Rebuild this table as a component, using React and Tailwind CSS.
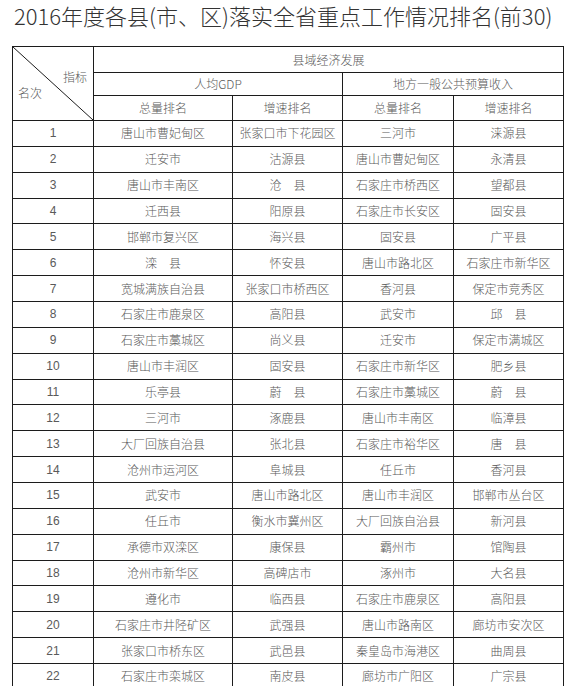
import React from 'react'

const rows = [
  ['唐山市曹妃甸区', '张家口市下花园区', '三河市', '涞源县'],
  ['迁安市', '沽源县', '唐山市曹妃甸区', '永清县'],
  ['唐山市丰南区', '沧　县', '石家庄市桥西区', '望都县'],
  ['迁西县', '阳原县', '石家庄市长安区', '固安县'],
  ['邯郸市复兴区', '海兴县', '固安县', '广平县'],
  ['滦　县', '怀安县', '唐山市路北区', '石家庄市新华区'],
  ['宽城满族自治县', '张家口市桥西区', '香河县', '保定市竞秀区'],
  ['石家庄市鹿泉区', '高阳县', '武安市', '邱　县'],
  ['石家庄市藁城区', '尚义县', '迁安市', '保定市满城区'],
  ['唐山市丰润区', '固安县', '石家庄市新华区', '肥乡县'],
  ['乐亭县', '蔚　县', '石家庄市藁城区', '蔚　县'],
  ['三河市', '涿鹿县', '唐山市丰南区', '临漳县'],
  ['大厂回族自治县', '张北县', '石家庄市裕华区', '唐　县'],
  ['沧州市运河区', '阜城县', '任丘市', '香河县'],
  ['武安市', '唐山市路北区', '唐山市丰润区', '邯郸市丛台区'],
  ['任丘市', '衡水市冀州区', '大厂回族自治县', '新河县'],
  ['承德市双滦区', '康保县', '霸州市', '馆陶县'],
  ['沧州市新华区', '高碑店市', '涿州市', '大名县'],
  ['遵化市', '临西县', '石家庄市鹿泉区', '高阳县'],
  ['石家庄市井陉矿区', '武强县', '唐山市路南区', '廊坊市安次区'],
  ['张家口市桥东区', '武邑县', '秦皇岛市海港区', '曲周县'],
  ['石家庄市栾城区', '南皮县', '廊坊市广阳区', '广宗县'],
]

const cell = 'border border-[#1c1c1c] text-center align-middle p-0 font-light'

export default function App() {
  return (
    <div className="w-[575px] bg-white font-['Noto_Sans_CJK_SC',sans-serif] text-[#5a5a5a]">
      <div className="h-[46px] pl-[14px] pr-[4px]">
        <h1 className="text-[22px] leading-[31px] text-[#333] font-light">
          2016年度各县(市、区)落实全省重点工作情况排名(前30)
        </h1>
      </div>

      <table className="ml-[12px] w-[551px] table-fixed border-collapse text-[12px] leading-none">
        <colgroup>
          <col className="w-[81px]" />
          <col className="w-[139px]" />
          <col className="w-[110px]" />
          <col className="w-[111px]" />
          <col className="w-[110px]" />
        </colgroup>
        <thead>
          <tr className="h-[26px]">
            <th rowSpan={3} className={cell + ' relative'}>
              <svg className="absolute inset-0 h-full w-full" preserveAspectRatio="none" viewBox="0 0 100 100">
                <line x1="0" y1="0" x2="100" y2="100" stroke="#1c1c1c" strokeWidth="1" vectorEffect="non-scaling-stroke" />
              </svg>
              <span className="absolute right-[6px] top-[24px]">指标</span>
              <span className="absolute left-[5px] top-[40px]">名次</span>
            </th>
            <th colSpan={4} className={cell}>县域经济发展</th>
          </tr>
          <tr className="h-[23px]">
            <th colSpan={2} className={cell}>人均GDP</th>
            <th colSpan={2} className={cell}>地方一般公共预算收入</th>
          </tr>
          <tr className="h-[25px]">
            <th className={cell}>总量排名</th>
            <th className={cell}>增速排名</th>
            <th className={cell}>总量排名</th>
            <th className={cell}>增速排名</th>
          </tr>
        </thead>
        <tbody>
          {rows.map((r, i) => (
            <tr key={i} className="h-[25.86px]">
              <td className={cell + " font-['Liberation_Sans',sans-serif]"}>{i + 1}</td>
              {r.map((v, j) => (
                <td key={j} className={cell}>{v}</td>
              ))}
            </tr>
          ))}
        </tbody>
      </table>
    </div>
  )
}
